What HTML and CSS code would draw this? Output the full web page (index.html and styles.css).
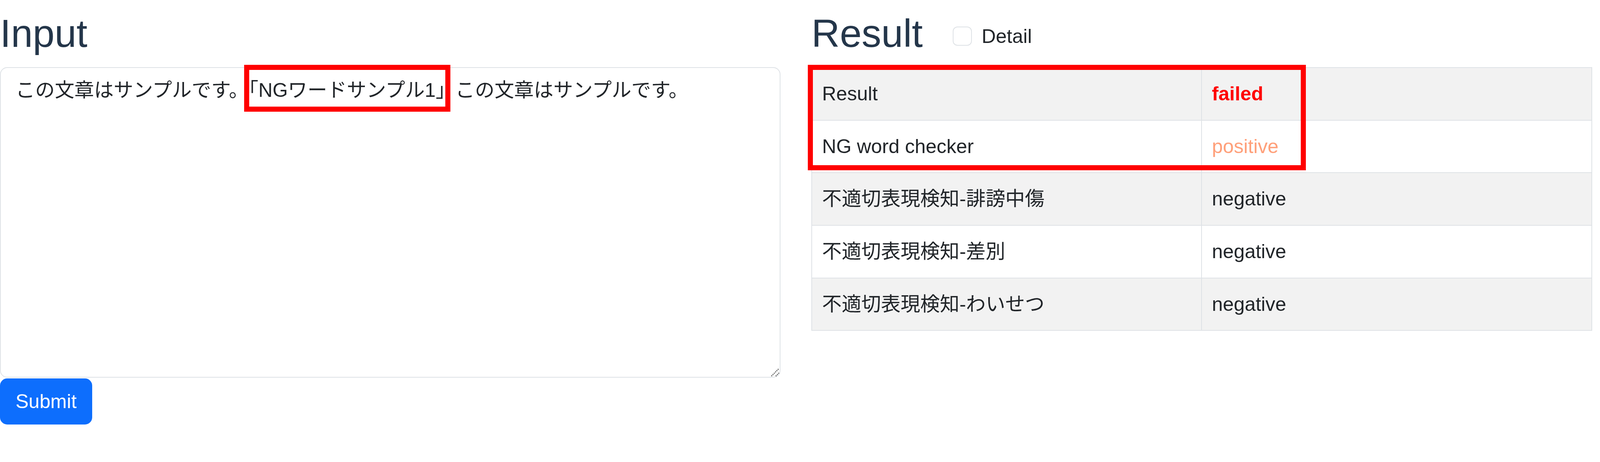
FILE: index.html
```html
<!DOCTYPE html>
<html lang="ja">

<head>
  <meta charset="UTF-8">
  <title>NG word checker</title>

  <link rel="stylesheet" href="styles.css">
</head>

<body>

  <div class="page">

    <div class="col">
      <h2 class="title">Input</h2>

      <div class="input-box">
        <textarea class="input-text" rows="10">この文章はサンプルです。「NGワードサンプル1」この文章はサンプルです。</textarea>
        <span class="grip">
          <svg viewBox="0 0 30 30">
            <line x1="5" y1="26" x2="26" y2="5" />
            <line x1="17" y1="26" x2="26" y2="17" />
          </svg>
        </span>
        <span class="mark mark-word"></span>
      </div>

      <button class="btn-submit" type="button">Submit</button>
    </div>

    <div class="col">
      <div class="result-head">
        <h2 class="title">Result</h2>
        <label class="detail">
          <input class="detail__check" type="checkbox">
          Detail
        </label>
      </div>

      <div class="result-box">
        <table class="result-table">
          <tr>
            <td>Result</td>
            <td class="failed">failed</td>
          </tr>
          <tr>
            <td>NG word checker</td>
            <td class="positive">positive</td>
          </tr>
          <tr>
            <td>不適切表現検知-誹謗中傷</td>
            <td>negative</td>
          </tr>
          <tr>
            <td>不適切表現検知-差別</td>
            <td>negative</td>
          </tr>
          <tr>
            <td>不適切表現検知-わいせつ</td>
            <td>negative</td>
          </tr>
        </table>
        <span class="mark mark-rows"></span>
      </div>
    </div>

  </div>

</body>

</html>
```

FILE: styles.css
```css
/* 1rem follows the window width, so the whole page scales with it */
html {
  font-size: 1.2273vw;
}

body {
  margin: 0;
  overflow: hidden;
  font-family: "Liberation Sans", "Noto Sans CJK JP", sans-serif;
  font-size: 1rem;
  color: #212529;
  background-color: #fff;
}

.page {
  display: grid;
  grid-template-columns: 1fr 1fr;
  column-gap: 1.574rem;
  padding: 0.5rem 0.407rem 0 0;
}

.col {
  display: flex;
  flex-direction: column;
  align-items: flex-start;
  min-width: 0;
}

.title {
  margin: 0 0 0.52rem;
  font-size: 2rem;
  font-weight: 400;
  line-height: 1.2;
  color: #24364a;
}

/* input side */
.input-box {
  position: relative;
  align-self: stretch;
}

.input-text {
  display: block;
  box-sizing: border-box;
  width: 100%;
  height: 15.815rem;
  margin: 0;
  padding: 0.37rem 0.75rem;
  border: 0.056rem solid #dee2e6;
  border-radius: 0.37rem;
  font-family: inherit;
  font-size: 1rem;
  line-height: 1.5;
  color: #212529;
  resize: none;
  outline: 0;
}

.grip {
  position: absolute;
  right: 0;
  bottom: 0;
  width: 0.556rem;
  height: 0.556rem;
}

.grip svg {
  display: block;
  width: 100%;
  height: 100%;
}

.grip line {
  stroke: #666;
  stroke-width: 3;
  stroke-dasharray: 3 2;
}

.btn-submit {
  margin-top: 0.037rem;
  padding: 0.39rem 0.75rem;
  border: 0.056rem solid #0d6efd;
  border-radius: 0.37rem;
  background-color: #0d6efd;
  color: #fff;
  font-family: "Liberation Sans", sans-serif;
  font-size: 1rem;
  line-height: 1.5;
  cursor: pointer;
}

/* result side */
.result-head {
  display: flex;
  align-items: flex-start;
}

.detail {
  display: flex;
  align-items: center;
  height: 0.98rem;
  margin: 0.852rem 0 0 1.52rem;
  line-height: 0.98rem;
}

.detail__check {
  appearance: none;
  box-sizing: border-box;
  width: 0.98rem;
  height: 0.98rem;
  margin: 0 0.5rem 0 0;
  border: 0.056rem solid #dee2e6;
  border-radius: 0.24rem;
  background-color: #fff;
}

.result-box {
  position: relative;
  align-self: stretch;
}

.result-table {
  width: 100%;
  table-layout: fixed;
  border-collapse: collapse;
}

.result-table td {
  padding: 0.5rem;
  border: 0.056rem solid #dee2e6;
  line-height: 1.64rem;
  white-space: nowrap;
}

.result-table tr:nth-child(odd) td {
  background-color: #f2f2f2;
}

.failed {
  color: #ff0000;
  font-weight: 700;
}

.positive {
  color: #ffa07a;
}

/* highlight boxes */
.mark {
  position: absolute;
  box-sizing: border-box;
  border: 0.26rem solid #ff0000;
}

.mark-word {
  top: -0.111rem;
  left: 12.426rem;
  width: 10.52rem;
  height: 2.389rem;
}

.mark-rows {
  top: -0.111rem;
  left: -0.194rem;
  width: 25.37rem;
  height: 5.37rem;
}
```
